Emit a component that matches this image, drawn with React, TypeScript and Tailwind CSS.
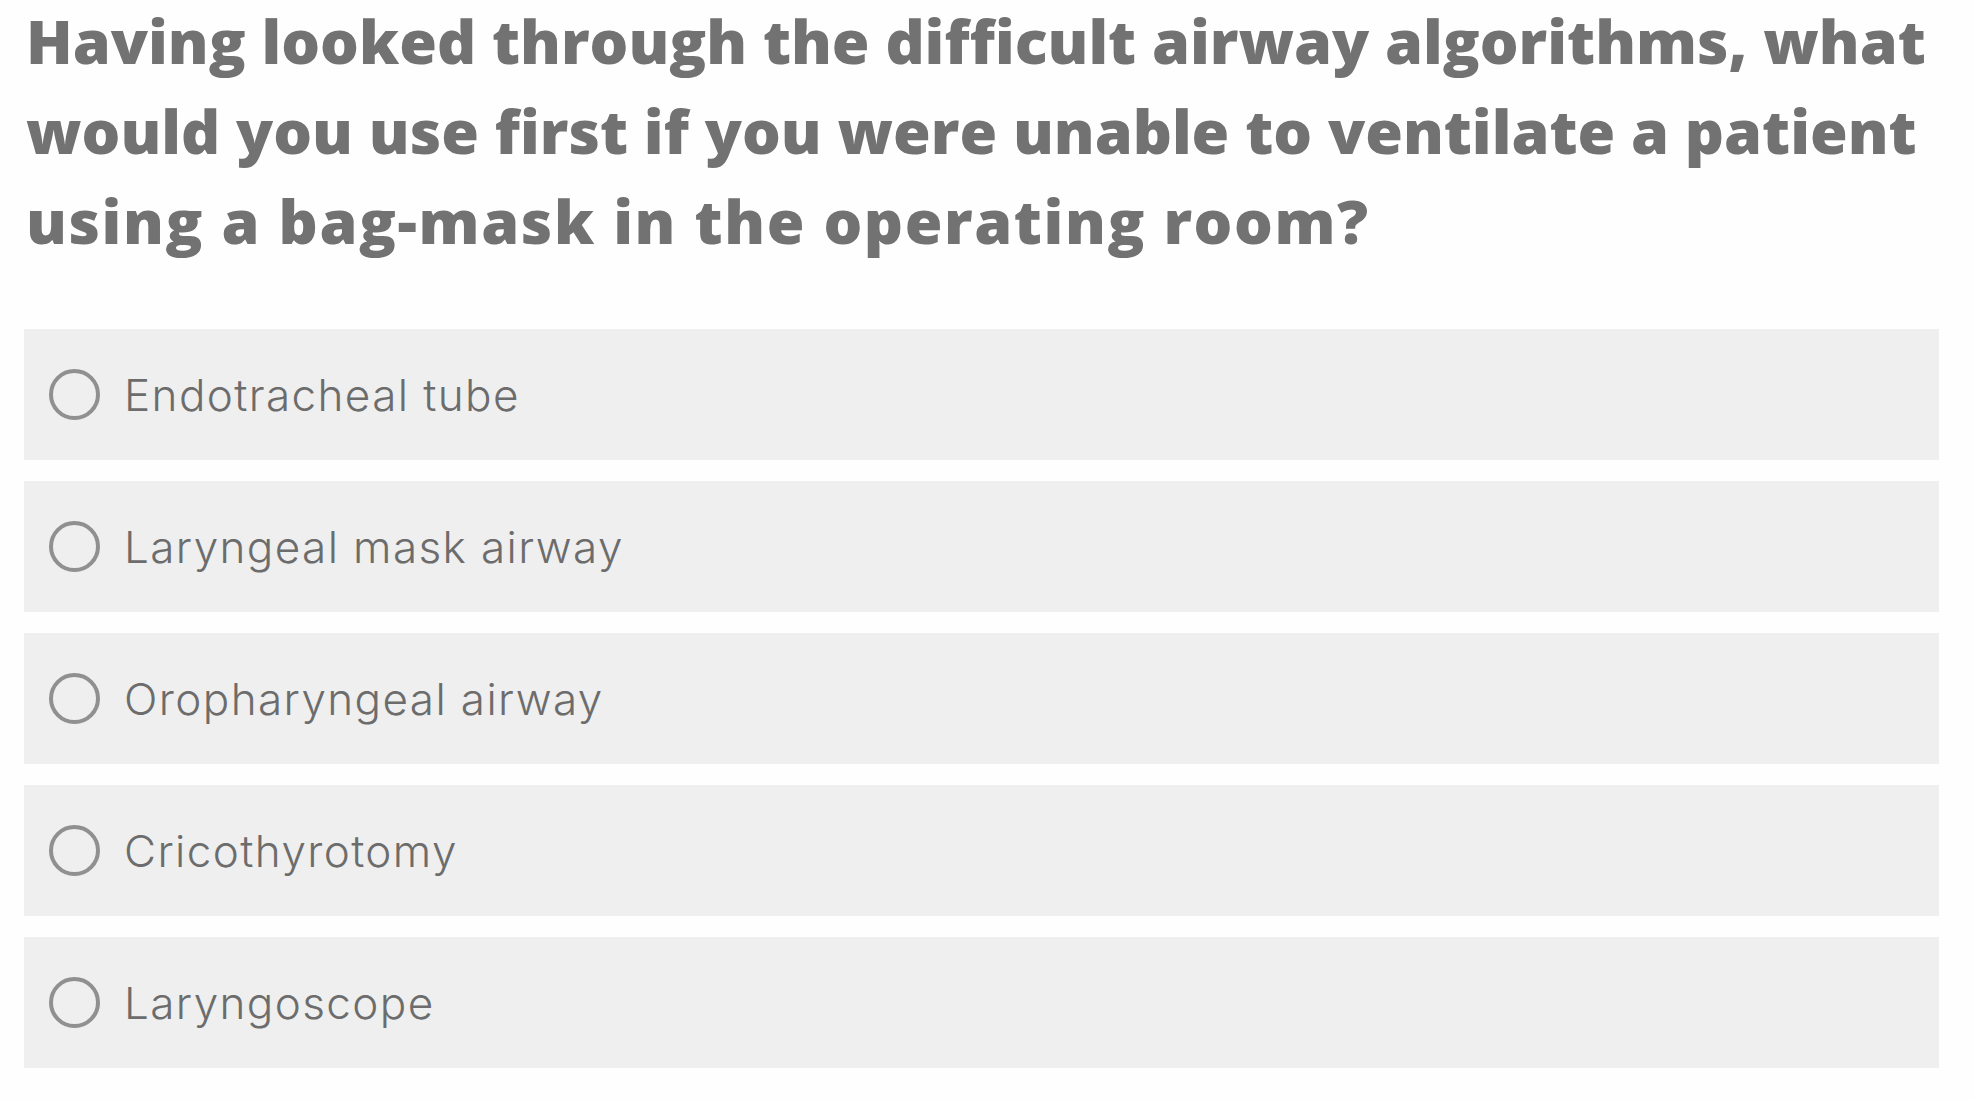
import React from "react";

const options = [
  "Endotracheal tube",
  "Laryngeal mask airway",
  "Oropharyngeal airway",
  "Cricothyrotomy",
  "Laryngoscope",
];

function Radio() {
  return (
    <span className="block h-[51px] w-[51px] shrink-0 rounded-full border-[4px] border-[#909090]" />
  );
}

export default function App() {
  return (
    <div className="min-h-[1104px] w-full bg-[#fefefe] px-[24px]">
      <h1
        className="-mt-[4px] whitespace-nowrap pl-[2px] text-[61px] font-extrabold leading-[90px] text-[#727272]"
        style={{ fontFamily: '"Open Sans", sans-serif' }}
      >
        Having looked through the difficult airway algorithms, what
        <br />
        would you use first if you were unable to ventilate a patient
        <br />
        <span className="tracking-[1.6px]">using a bag-mask in the operating room?</span>
      </h1>
      <div className="mt-[63px] flex w-[1915px] flex-col gap-[21px]">
        {options.map((o) => (
          <label
            key={o}
            className="flex h-[131px] items-center bg-[#efefef] pl-[25px]"
          >
            <Radio />
            <span
              className="ml-[24px] text-[44px] font-light tracking-[1.4px] text-[#6c6c6c]"
              style={{ fontFamily: 'Inter, sans-serif' }}
            >
              {o}
            </span>
          </label>
        ))}
      </div>
    </div>
  );
}
